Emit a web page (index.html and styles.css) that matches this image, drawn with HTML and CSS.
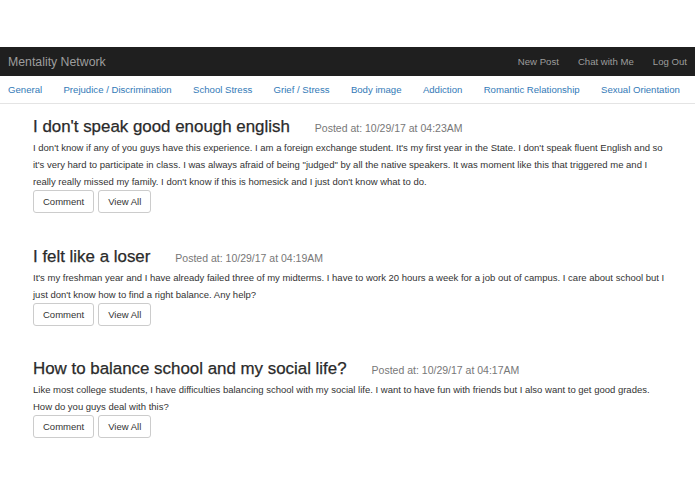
FILE: index.html
```html
<!DOCTYPE html>
<html>
<head>
<meta charset="utf-8">
<link rel="stylesheet" href="styles.css">
</head>
<body>
<div class="topspace"></div>
<nav class="navbar">
  <a class="brand">Mentality Network</a>
  <div class="navlinks">
    <a>New Post</a>
    <a>Chat with Me</a>
    <a>Log Out</a>
  </div>
</nav>
<div class="subnav">
  <a>General</a>
  <a>Prejudice / Discrimination</a>
  <a>School Stress</a>
  <a>Grief / Stress</a>
  <a>Body image</a>
  <a>Addiction</a>
  <a>Romantic Relationship</a>
  <a>Sexual Orientation</a>
</div>
<main class="posts">
  <article class="post">
    <div class="head"><h3>I don't speak good enough english</h3><span class="date">Posted at: 10/29/17 at 04:23AM</span></div>
    <p>I don't know if any of you guys have this experience. I am a foreign exchange student. It's my first year in the State. I don't speak fluent English and so<br>it's very hard to participate in class. I was always afraid of being "judged" by all the native speakers. It was moment like this that triggered me and I<br>really really missed my family. I don't know if this is homesick and I just don't know what to do.</p>
    <div class="btns"><button>Comment</button><button>View All</button></div>
  </article>
  <article class="post">
    <div class="head"><h3>I felt like a loser</h3><span class="date">Posted at: 10/29/17 at 04:19AM</span></div>
    <p>It's my freshman year and I have already failed three of my midterms. I have to work 20 hours a week for a job out of campus. I care about school but I<br>just don't know how to find a right balance. Any help?</p>
    <div class="btns"><button>Comment</button><button>View All</button></div>
  </article>
  <article class="post">
    <div class="head"><h3>How to balance school and my social life?</h3><span class="date">Posted at: 10/29/17 at 04:17AM</span></div>
    <p>Like most college students, I have difficulties balancing school with my social life. I want to have fun with friends but I also want to get good grades.<br>How do you guys deal with this?</p>
    <div class="btns"><button>Comment</button><button>View All</button></div>
  </article>
</main>
</body>
</html>
```
FILE: styles.css
```css
* { box-sizing: border-box; }
body {
  margin: 0;
  background: #fff;
  font-family: "Liberation Sans", Arial, sans-serif;
  color: #333;
}
.topspace { height: 47px; }
.navbar {
  height: 29px;
  background: #1f1f1f;
  display: flex;
  align-items: center;
  justify-content: space-between;
  padding: 0 8px;
}
.navbar a {
  color: #9d9d9d;
  text-decoration: none;
}
.brand { font-size: 12.3px; }
.navlinks {
  display: flex;
  gap: 19px;
  font-size: 9.6px;
}
.subnav {
  height: 28px;
  display: flex;
  align-items: center;
  justify-content: space-between;
  padding: 0 15px 0 8px;
  border-bottom: 1px solid #e4e4e4;
  font-size: 9.6px;
}
.subnav a { color: #337ab7; }
.posts {
  padding: 13px 0 0 33px;
}
.post { margin-bottom: 33.5px; }
.head {
  display: flex;
  align-items: baseline;
  height: 20px;
}
h3 {
  margin: 0;
  font-size: 16.9px;
  font-weight: 500;
  line-height: 20px;
  color: #2a2a2a;
  -webkit-text-stroke: 0.25px #2a2a2a;
}
.date {
  margin-left: 25px;
  font-size: 10.5px;
  color: #777;
}
p {
  margin: 2px 0 0;
  width: 660px;
  font-size: 9.5px;
  line-height: 17px;
  color: #333;
}
.btns {
  display: flex;
  gap: 4px;
}
button {
  height: 23px;
  padding: 0 9px;
  background: #fff;
  border: 1px solid #ccc;
  border-radius: 3px;
  font-family: "Liberation Sans", Arial, sans-serif;
  font-size: 9.5px;
  color: #333;
}
```
